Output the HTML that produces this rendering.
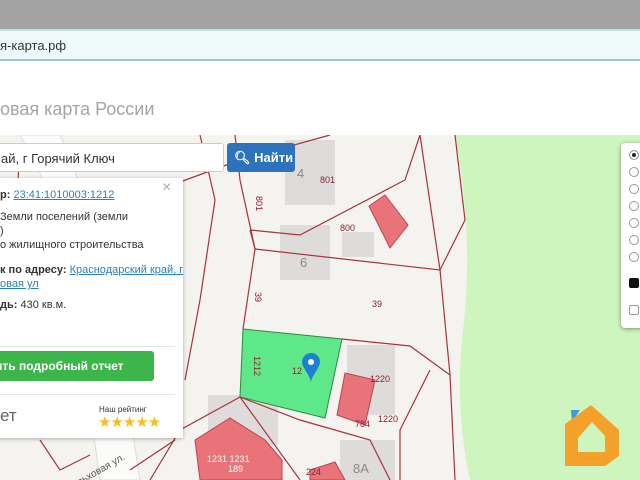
<!DOCTYPE html>
<html><head><meta charset="utf-8"><style>
*{margin:0;padding:0;box-sizing:border-box}
body{width:640px;height:480px;overflow:hidden;font-family:"Liberation Sans",sans-serif;background:#fff;position:relative}
.top{position:absolute;left:0;top:0;width:640px;height:29px;background:#a3a3a3}
.addr{position:absolute;left:0;top:29px;width:640px;height:32px;background:#eefafa;border-top:2px solid #bfe0e0;border-bottom:2px solid #9cc8cc}
.addr span{position:absolute;left:0;top:7px;font-size:13px;color:#333}
.title{position:absolute;left:0;top:99px;font-size:18px;color:#a5a5a5}
.map{position:absolute;left:0;top:135px;width:640px;height:345px;overflow:hidden;background:#f5f3ef}
.search{position:absolute;left:-5px;top:143px;width:229px;height:29px;background:#fff;border:1px solid #ccc;border-radius:3px;font-size:13px;color:#333;padding:7px 0 0 5px}
.btn{position:absolute;left:227px;top:143px;width:68px;height:29px;background:#2d72bb;border-radius:3px;color:#fff;font-size:13px;font-weight:bold;padding:7px 0 0 7px}
.pop{position:absolute;left:-5px;top:178px;width:188px;height:260px;background:#fff;box-shadow:0 1px 4px rgba(0,0,0,.3);font-size:11px;color:#333}
.pop p{position:absolute;left:5px;white-space:nowrap}
.pop a{color:#2a7fc0;text-decoration:underline}
.green{position:absolute;left:0;top:173px;width:159px;height:30px;background:#3cb54a;border-radius:3px;color:#fff;font-size:12px;font-weight:bold;padding:8px 0 0 0}
.panel{position:absolute;left:621px;top:8px;width:25px;height:185px;background:#fff;border-radius:4px;box-shadow:0 1px 4px rgba(0,0,0,.4)}
.r{position:absolute;left:8px;width:10px;height:10px;border:1px solid #999;border-radius:50%;background:#fff}
</style></head><body>
<div class="top"></div>
<div class="addr"><span>я-карта.рф</span></div>
<div class="title">овая карта России</div>
<div class="map">
<svg width="640" height="345" viewBox="0 135 640 345" style="position:absolute;left:0;top:0">
<path d="M455 135 Q475 240 462 340 Q455 410 470 480 L640 480 L640 135Z" fill="#cdf5bd"/>
<path d="M20 135 Q60 200 75 300 L100 480 L140 480 Q120 350 100 250 Q80 180 60 135Z" fill="#fbfbfa" stroke="#e0dcd6"/>
<g fill="#dedcda">
<rect x="285" y="140" width="50" height="65"/><rect x="280" y="225" width="50" height="55"/><rect x="342" y="232" width="32" height="25"/>
<rect x="347" y="345" width="48" height="70"/><rect x="208" y="395" width="70" height="50"/><rect x="340" y="440" width="55" height="40"/>
</g>
<g fill="#e8747a" stroke="#c04050">
<polygon points="369,206 385,195 408,225 390,248"/>
<polygon points="337,415 345,373 375,380 365,425"/>
<path d="M195 440 L230 418 L265 440 L282 460 L282 480 L200 480 Z"/>
<polygon points="310,470 335,462 345,480 310,480"/>
</g>
<polygon points="243,329 342,339 325,418 240,397" fill="#5fe88a" stroke="#2a8c3c" stroke-width="1"/>
<g fill="none" stroke="#a8323c" stroke-width="1.2">
<path d="M180 182 L240 160 L330 135"/><path d="M250 230 L300 235 L405 180 L420 135"/>
<path d="M255 249 L440 270 L420 135"/><path d="M255 249 L240 180 L235 135"/>
<path d="M250 230 L255 249 L243 329"/><path d="M342 339 L410 346 L450 375 L440 270"/>
<path d="M450 375 L455 480"/><path d="M440 270 L465 220 L455 135"/>
<path d="M240 397 L300 420 L370 440 L390 480"/><path d="M240 397 L180 430 L150 480"/>
<path d="M240 397 L300 480"/><path d="M430 370 L400 430 L400 480"/>
<path d="M200 135 L215 200 L200 300 L185 380"/><path d="M20 150 L10 300"/>
<path d="M40 440 L60 470 L90 455"/><path d="M130 470 L175 440"/>
</g>
<g font-size="9" fill="#8b2030" font-family="Liberation Sans">
<text x="320" y="183">801</text><text x="340" y="231">800</text><text x="372" y="307">39</text>
<text x="370" y="382">1220</text><text x="378" y="422">1220</text><text x="355" y="427">784</text>
<text x="306" y="475">224</text><text x="207" y="462" fill="#fff">1231 1231</text><text x="228" y="472" fill="#fff">189</text>
<text x="292" y="374">12</text>
<text transform="translate(255,292) rotate(90)">39</text><text transform="translate(256,196) rotate(90)">801</text>
<text transform="translate(254,356) rotate(90)">1212</text>
</g>
<g font-size="13" fill="#888"><text x="297" y="178">4</text><text x="300" y="267">6</text><text x="353" y="473">8A</text></g>
<text x="65" y="478" font-size="10" fill="#555" transform="rotate(-30 90 470)">Ольховая ул.</text>
<path d="M311 353 a9 9 0 0 1 9 9 c0 6 -9 14 -9 21 c0 -7 -9 -15 -9 -21 a9 9 0 0 1 9 -9z" fill="#1f7fd0"/>
<circle cx="311" cy="362" r="3" fill="#fff"/>
<polygon points="571,410 580,410 572,422" fill="#3a9be0"/>
<path fill-rule="evenodd" fill="#f4a12a" d="M591 405 L619 430 L619 456 L605 466 L565 466 L565 424 Z M592 422 L578 438 L578 452 L605 452 L605 436 Z"/>
</svg>
<div class="panel">
<div class="r" style="top:7px;background:#222;box-shadow:inset 0 0 0 2px #fff"></div>
<div class="r" style="top:24px"></div><div class="r" style="top:41px"></div><div class="r" style="top:58px"></div>
<div class="r" style="top:75px"></div><div class="r" style="top:92px"></div><div class="r" style="top:109px"></div>
<div style="position:absolute;left:8px;top:135px;width:10px;height:10px;background:#111;border-radius:2px"></div>
<div style="position:absolute;left:8px;top:162px;width:10px;height:10px;border:1px solid #999;border-radius:2px"></div>
</div>
</div>
<div class="search">ай, г Горячий Ключ</div>
<div class="btn">&#x1F50D;&#xFE0E; Найти</div>
<div class="pop">
<span style="position:absolute;left:167px;top:1px;font-size:16px;color:#aaa">×</span>
<p style="top:11px"><b>р:</b> <a>23:41:1010003:1212</a></p>
<p style="top:33px">Земли поселений (земли</p>
<p style="top:47px">)</p>
<p style="top:61px">о жилищного строительства</p>
<p style="top:86px"><b>к по адресу:</b> <a>Краснодарский край, г</a></p>
<p style="top:100px"><a>овая ул</a></p>
<p style="top:121px"><b>дь:</b> 430 кв.м.</p>
<div style="position:absolute;left:0;top:168px;width:180px;border-top:1px solid #e5e5e5"></div>
<div class="green">ить подробный отчет</div>
<div style="position:absolute;left:0;top:216px;width:180px;border-top:1px solid #e5e5e5"></div>
<p style="top:228px;font-size:17px;color:#666">ет</p>
<p style="top:227px;left:104px;font-size:8px;color:#333">Наш рейтинг</p>
<p style="top:235px;left:103px;font-size:15px;color:#f4c020;letter-spacing:-1px">★★★★★</p>
</div>
</body></html>
